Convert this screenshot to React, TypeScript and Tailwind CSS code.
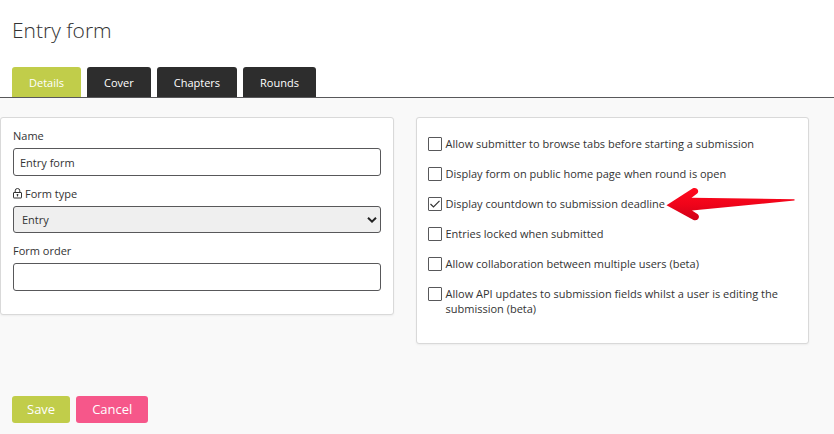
import { useState } from "react";

const tabs = ["Details", "Cover", "Chapters", "Rounds"];

const initialOptions = [
  { id: "browse-tabs", label: "Allow submitter to browse tabs before starting a submission", checked: false },
  { id: "public-home", label: "Display form on public home page when round is open", checked: false },
  { id: "countdown", label: "Display countdown to submission deadline", checked: true },
  { id: "lock-entries", label: "Entries locked when submitted", checked: false },
  { id: "collaboration", label: "Allow collaboration between multiple users (beta)", checked: false },
  {
    id: "api-updates",
    label: "Allow API updates to submission fields whilst a user is editing the submission (beta)",
    checked: false,
  },
];

function LockIcon() {
  return (
    <svg width="9" height="11" viewBox="0 0 9 11" fill="none" stroke="#333" aria-hidden="true">
      <rect x="0.5" y="4.5" width="8" height="5.5" rx="0.4" />
      <path d="M2.2 4.5V2.8a2.3 2.3 0 0 1 4.6 0v1.7" />
      <path d="M4.5 6.2v2.2M3.6 6.8h1.8" />
    </svg>
  );
}

function Arrow() {
  return (
    <svg
      className="absolute top-1/2 left-full -translate-y-1/2"
      width="130"
      height="34"
      viewBox="0 0 130 34"
      aria-hidden="true"
    >
      <defs>
        <linearGradient id="arrow-fill" x1="0" y1="0" x2="0" y2="1">
          <stop offset="0" stopColor="#ff0a1e" />
          <stop offset="0.5" stopColor="#f0041a" />
          <stop offset="1" stopColor="#cf0018" />
        </linearGradient>
      </defs>
      <path
        fill="url(#arrow-fill)"
        d="M1.5 18.2 L27.5 1.5 C31.5 -0.5 35 3.8 32.2 6.6 L26.5 10.8 L129.500 12.200 V13.5 L27 23.5 L32.8 27.200 C35.800 30.2 32.5 34.500 28.500 33 Z"
      />
    </svg>
  );
}

export default function App() {
  const [activeTab, setActiveTab] = useState("Details");
  const [name, setName] = useState("Entry form");
  const [order, setOrder] = useState("");
  const [options, setOptions] = useState(initialOptions);

  const toggle = (id: string) => {
    setOptions(options.map((o) => (o.id === id ? { ...o, checked: !o.checked } : o)));
  };

  const inputClass =
    "block h-7 w-full rounded-[3px] border border-[#58585a] bg-white px-1.5 text-[11px] text-[#333] outline-none";

  return (
    <div className="min-h-screen bg-[#f9f9f9] font-['Open_Sans',sans-serif] text-[11px] leading-[15px] text-[#333]">
      <header className="border-b border-[#58585a] bg-white px-3 pt-3.5">
        <h1 className="text-[21px] leading-8 font-light">Entry form</h1>
        <nav className="mt-[21px] flex gap-1.5" role="tablist">
          {tabs.map((tab) => (
            <button
              key={tab}
              type="button"
              role="tab"
              aria-selected={activeTab === tab}
              onClick={() => setActiveTab(tab)}
              className={`h-[30px] rounded-t-[3px] px-[17px] font-medium text-white ${
                activeTab === tab ? "bg-[#c1cd4a]" : "bg-[#2d2d2d]"
              }`}
            >
              {tab}
            </button>
          ))}
        </nav>
      </header>

      <form onSubmit={(e) => e.preventDefault()}>
        <div className="mt-[19px] mr-[25px] grid grid-cols-2 items-start gap-[22px]">
          <section className="rounded-[3px] border border-[#d9d9d9] bg-white px-3 pt-2.5 pb-[23px] shadow-xs">
            <label htmlFor="name" className="mb-[5px] block">
              Name
            </label>
            <input
              id="name"
              type="text"
              value={name}
              onChange={(e) => setName(e.target.value)}
              className={inputClass}
            />

            <label htmlFor="form-type" className="mt-2.5 mb-[5px] flex items-center gap-[3px]">
              <LockIcon />
              Form type
            </label>
            <div className="relative">
              <select
                id="form-type"
                className="block h-[27px] w-full appearance-none rounded-[3px] border border-[#58585a] bg-[#efefef] px-2 text-[11px] text-[#333]"
              >
                <option>Entry</option>
              </select>
              <svg
                className="pointer-events-none absolute top-1/2 right-1 -translate-y-1/2"
                width="10"
                height="6"
                viewBox="0 0 10 6"
                fill="none"
                stroke="#222"
                strokeWidth="2"
                aria-hidden="true"
              >
                <path d="M1 0.8L5 4.6L9 0.8" />
              </svg>
            </div>

            <label htmlFor="form-order" className="mt-2.5 mb-[5px] block">
              Form order
            </label>
            <input
              id="form-order"
              type="text"
              value={order}
              onChange={(e) => setOrder(e.target.value)}
              className={inputClass}
            />
          </section>

          <section className="rounded-[3px] border border-[#d9d9d9] bg-white px-[11px] pt-[18px] pb-[27px] shadow-xs">
            <div className="flex flex-col gap-[15px]">
              {options.map((option) => (
                <div key={option.id} className="flex items-start gap-1">
                  <span className="relative flex h-[15px] shrink-0 items-center">
                    <input
                      id={option.id}
                      type="checkbox"
                      checked={option.checked}
                      onChange={() => toggle(option.id)}
                      className="peer size-3.5 appearance-none rounded-[1px] border border-[#58585a] bg-white"
                    />
                    <svg
                      className="pointer-events-none invisible absolute inset-x-0 mx-auto peer-checked:visible"
                      width="10"
                      height="8"
                      viewBox="0 0 10 8"
                      fill="none"
                      stroke="#333"
                      strokeWidth="1.2"
                      aria-hidden="true"
                    >
                      <path d="M0.5 4L3.5 7L9.5 0.8" />
                    </svg>
                  </span>
                  <label htmlFor={option.id} className="relative">
                    {option.label}
                    {option.id === "countdown" && <Arrow />}
                  </label>
                </div>
              ))}
            </div>
          </section>
        </div>

        <div className="mt-[52px] flex gap-1.5 px-3 pb-[11px]">
          <button type="submit" className="h-[27px] rounded-[3px] bg-[#c1cd4a] px-[15px] text-[13px] font-medium text-white">
            Save
          </button>
          <button type="button" className="h-[27px] rounded-[3px] bg-[#f6578a] px-4 text-[13px] font-medium text-white">
            Cancel
          </button>
        </div>
      </form>
    </div>
  );
}
